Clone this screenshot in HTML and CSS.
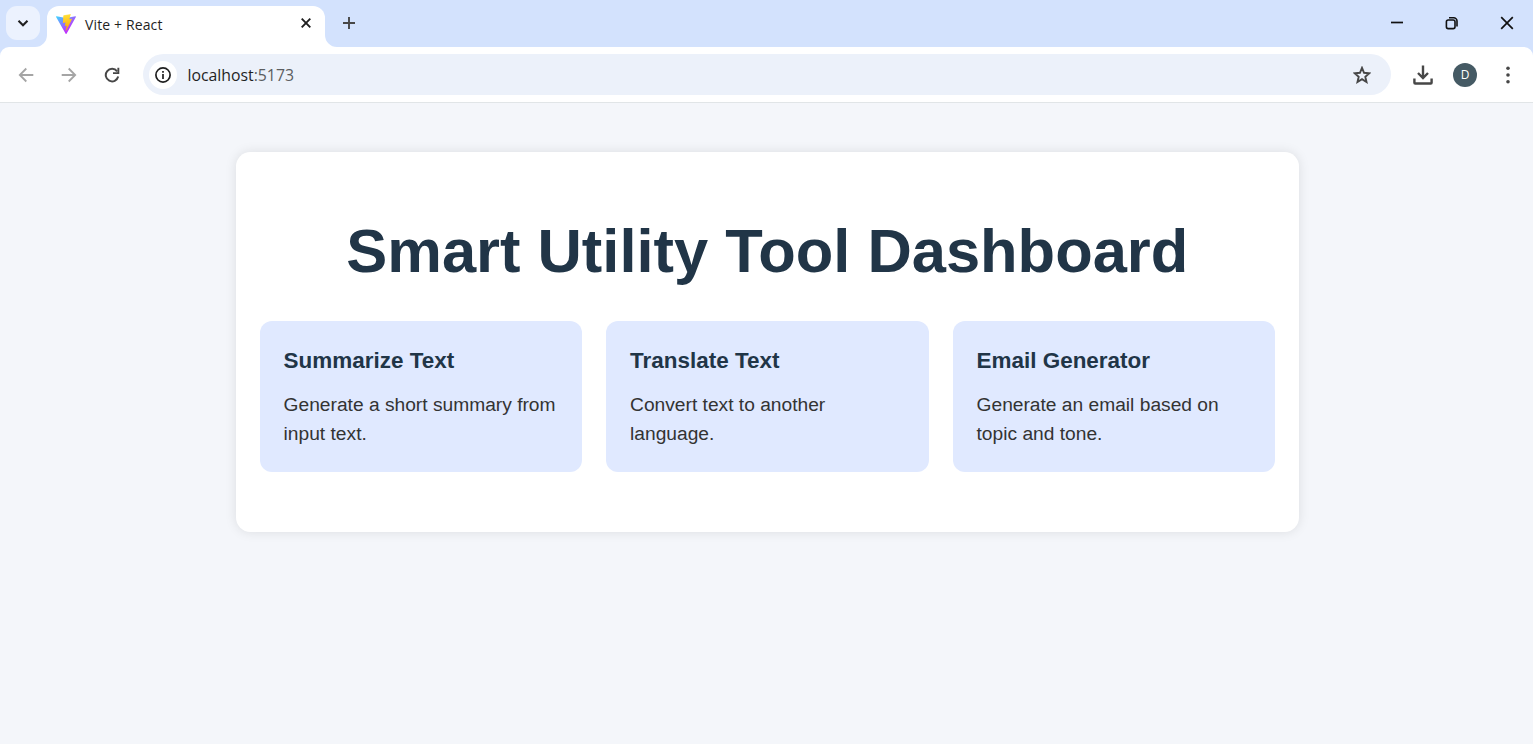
FILE: index.html
```html
<!DOCTYPE html>
<html lang="en">
<head>
<meta charset="utf-8">
<title>Vite + React</title>
<link rel="stylesheet" href="styles.css">
</head>
<body>
<header class="browser">
  <div class="tabstrip">
    <div class="tab-search"><svg width="34" height="34" viewBox="0 0 34 34"><path d="M12.5 14.8 17 19.2l4.5-4.4" fill="none" stroke="#1f1f1f" stroke-width="2.1"/></svg></div>
    <div class="tab">
      <svg class="flare flare-left" width="12" height="12" viewBox="0 0 12 12"><path d="M12 0v12H0A12 12 0 0 0 12 0z" fill="#fff"/></svg>
      <svg class="favicon" width="20" height="20" viewBox="0 0 256 257">
        <defs>
          <linearGradient id="vite-body" x1="-.8%" x2="57.6%" y1="7.6%" y2="78.4%"><stop offset="0" stop-color="#41D1FF"/><stop offset="1" stop-color="#BD34FE"/></linearGradient>
          <linearGradient id="vite-bolt" x1="43.4%" x2="50.3%" y1="2.2%" y2="89%"><stop offset="0" stop-color="#FFEA83"/><stop offset=".083" stop-color="#FFDD35"/><stop offset="1" stop-color="#FFA800"/></linearGradient>
        </defs>
        <path fill="url(#vite-body)" d="M255.153 37.938 134.897 252.976c-2.483 4.44-8.862 4.466-11.382.048L.875 37.958c-2.746-4.814 1.371-10.646 6.827-9.67l120.385 21.517a6.537 6.537 0 0 0 2.322-.004l117.867-21.483c5.438-.991 9.574 4.796 6.877 9.62Z"/>
        <path fill="url(#vite-bolt)" d="M185.432.063 96.44 17.501a3.268 3.268 0 0 0-2.634 3.014l-5.474 92.456a3.268 3.268 0 0 0 3.997 3.378l24.777-5.718c2.318-.535 4.413 1.507 3.936 3.838l-7.361 36.047c-.495 2.426 1.782 4.5 4.151 3.78l15.304-4.649c2.372-.72 4.652 1.36 4.15 3.788l-11.698 56.621c-.732 3.542 3.979 5.473 5.943 2.437l1.313-2.028 72.516-144.72c1.215-2.423-.88-5.186-3.54-4.672l-25.505 4.922c-2.396.462-4.435-1.77-3.759-4.114l16.646-57.705c.677-2.35-1.37-4.583-3.769-4.113Z"/>
      </svg>
      <span class="tab-title">Vite + React</span>
      <svg class="tab-close" width="12" height="12" viewBox="0 0 12 12"><path d="m1.7 1.7 8.6 8.6m0-8.6-8.6 8.6" stroke="#1f1f1f" stroke-width="1.9"/></svg>
      <svg class="flare flare-right" width="12" height="12" viewBox="0 0 12 12"><path d="M0 0v12h12A12 12 0 0 1 0 0z" fill="#fff"/></svg>
    </div>
    <svg class="new-tab" width="14" height="14" viewBox="0 0 14 14"><path d="M7 1v12M1 7h12" stroke="#474747" stroke-width="1.9"/></svg>
    <div class="window-controls">
      <svg width="14" height="14" viewBox="0 0 14 14"><path d="M1 6.5h12" stroke="#111" stroke-width="1.7"/></svg>
      <svg width="14" height="14" viewBox="0 0 14 14" fill="none" stroke="#111" stroke-width="1.6"><rect x="1.4" y="4" width="8.6" height="8.6" rx="1.8"/><path d="M4 1.7h4.6a3.4 3.4 0 0 1 3.4 3.4v5.4"/></svg>
      <svg width="14" height="14" viewBox="0 0 14 14"><path d="m1.2 1.2 11.6 11.6m0-11.6L1.2 12.8" stroke="#111" stroke-width="1.7"/></svg>
    </div>
  </div>
  <div class="toolbar">
    <svg class="nav-icon" width="16" height="16" viewBox="0 0 16 16" fill="none" stroke="#a5a5a5" stroke-width="1.8"><path d="M15.3 8H2M8.3 1.5 1.8 8l6.5 6.5"/></svg>
    <svg class="nav-icon" width="16" height="16" viewBox="0 0 16 16" fill="none" stroke="#a5a5a5" stroke-width="1.8"><path d="M.7 8H14M7.7 1.5 14.2 8l-6.5 6.5"/></svg>
    <svg class="nav-icon" width="16" height="16" viewBox="0 0 16 16"><path d="M13.1 4.3A6.3 6.3 0 1 0 14.2 9.6" fill="none" stroke="#474747" stroke-width="2"/><path d="M15.3.8v6.3H9V5.2h4.4V.8z" fill="#474747"/></svg>
    <div class="address">
      <span class="site-info"><svg width="18" height="18" viewBox="0 0 18 18"><circle cx="9" cy="9" r="7.1" fill="none" stroke="#1f1f1f" stroke-width="1.7"/><path d="M9 8v4.9M9 5.1v1.7" stroke="#1f1f1f" stroke-width="1.7"/></svg></span>
      <span class="url">localhost<span class="port">:5173</span></span>
      <svg class="star" width="18" height="18" viewBox="0 0 18 18"><path d="m9 1.9 2.05 4.9 5.25.45-4 3.5 1.2 5.2L9 13.2l-4.5 2.75 1.2-5.2-4-3.5 5.25-.45z" fill="none" stroke="#474747" stroke-width="1.9"/></svg>
    </div>
    <svg class="download" width="20" height="20" viewBox="0 0 20 20" fill="none" stroke="#474747" stroke-width="2.4"><path d="M10 .5v12.2M5 8l5 5 5-5M1.4 13.5v4.2q0 .8.8.8h15.6q.8 0 .8-.8v-4.2"/></svg>
    <span class="avatar">D</span>
    <svg class="menu" width="4" height="18" viewBox="0 0 4 18" fill="#474747"><circle cx="2" cy="2.2" r="1.8"/><circle cx="2" cy="9" r="1.8"/><circle cx="2" cy="15.7" r="1.8"/></svg>
  </div>
</header>
<main class="page">
  <section class="dashboard">
    <h1 class="heading">Smart Utility Tool Dashboard</h1>
    <div class="cards">
      <article class="card"><h3 class="card-title">Summarize Text</h3><p class="card-text">Generate a short summary from input text.</p></article>
      <article class="card"><h3 class="card-title">Translate Text</h3><p class="card-text">Convert text to another language.</p></article>
      <article class="card"><h3 class="card-title">Email Generator</h3><p class="card-text">Generate an email based on topic and tone.</p></article>
    </div>
  </section>
</main>
</body>
</html>
```
FILE: styles.css
```css
* { box-sizing: border-box; }
html, body { height: 100%; }
body { margin: 0; display: flex; flex-direction: column; overflow: hidden; background: #f4f6fa; font-family: "Liberation Sans", Arial, sans-serif; }
svg { display: block; flex: none; }

.browser { flex: none; background: #d3e2fd; font-family: "Open Sans", "Noto Sans", sans-serif; }
.tabstrip { height: 47px; display: flex; padding: 6px 19px 0 6px; }
.tab-search { width: 34px; height: 34px; border-radius: 11px; background: #ecf2fe; }
.tab { position: relative; width: 278px; height: 41px; margin-left: 7px; padding: 0 13px 5px 9px; display: flex; align-items: center; background: #fff; border-radius: 12px 12px 0 0; }
.flare { position: absolute; bottom: 0; }
.flare-left { left: -12px; }
.flare-right { right: -12px; }
.favicon { margin-bottom: 1px; }
.tab-title { margin: 1px 0 0 9px; font-size: 14px; letter-spacing: .13px; line-height: 20px; color: #1f1f1f; white-space: nowrap; }
.tab-close { margin-left: auto; margin-bottom: 2px; }
.new-tab { margin: 10px 0 0 17px; }
.window-controls { margin: 10px 0 0 auto; display: flex; gap: 41px; }

.toolbar { height: 56px; display: flex; align-items: center; padding: 0 23px 0 17.5px; background: #fff; border-bottom: 1px solid #e1e5e7; border-radius: 9px 9px 0 0; }
.nav-icon { margin-right: 27px; }
.address { flex: 1; height: 41px; margin-left: -3.5px; padding: 0 20px 0 6px; display: flex; align-items: center; border-radius: 21px; background: #ecf1fa; }
.site-info { width: 28px; height: 28px; display: grid; place-items: center; border-radius: 50%; background: #fff; }
.url { margin-left: 10.5px; font-size: 15.8px; line-height: 24px; color: #1f1f1f; }
.port { color: #5b5d60; }
.star { margin-left: auto; }
.download { margin-left: 22px; }
.avatar { width: 24px; height: 24px; margin-left: 20px; border-radius: 50%; background: #455a64; color: #fff; font-size: 12px; line-height: 24px; text-align: center; }
.menu { margin-left: 29px; }

.page { flex: 1; padding: 48.7px 234px 0 235.6px; }
.dashboard { height: 380px; padding: 62px 24px; background: #fff; border-radius: 14.4px; box-shadow: 0 0 12px rgba(0,0,0,.1); }
.heading { margin: 0 0 33.3px; font-size: 61.44px; line-height: 73.7px; text-align: center; color: #213547; }
.cards { display: grid; grid-template-columns: repeat(3, 1fr); gap: 24px; }
.card { height: 151.2px; padding: 23px 24px; border-radius: 12px; background: #e0e9ff; }
.card-title { margin: 0 0 14px; font-size: 22.46px; line-height: 33.7px; color: #213547; }
.card-text { margin: 0; font-size: 19.2px; line-height: 28.8px; color: #333; }
```
